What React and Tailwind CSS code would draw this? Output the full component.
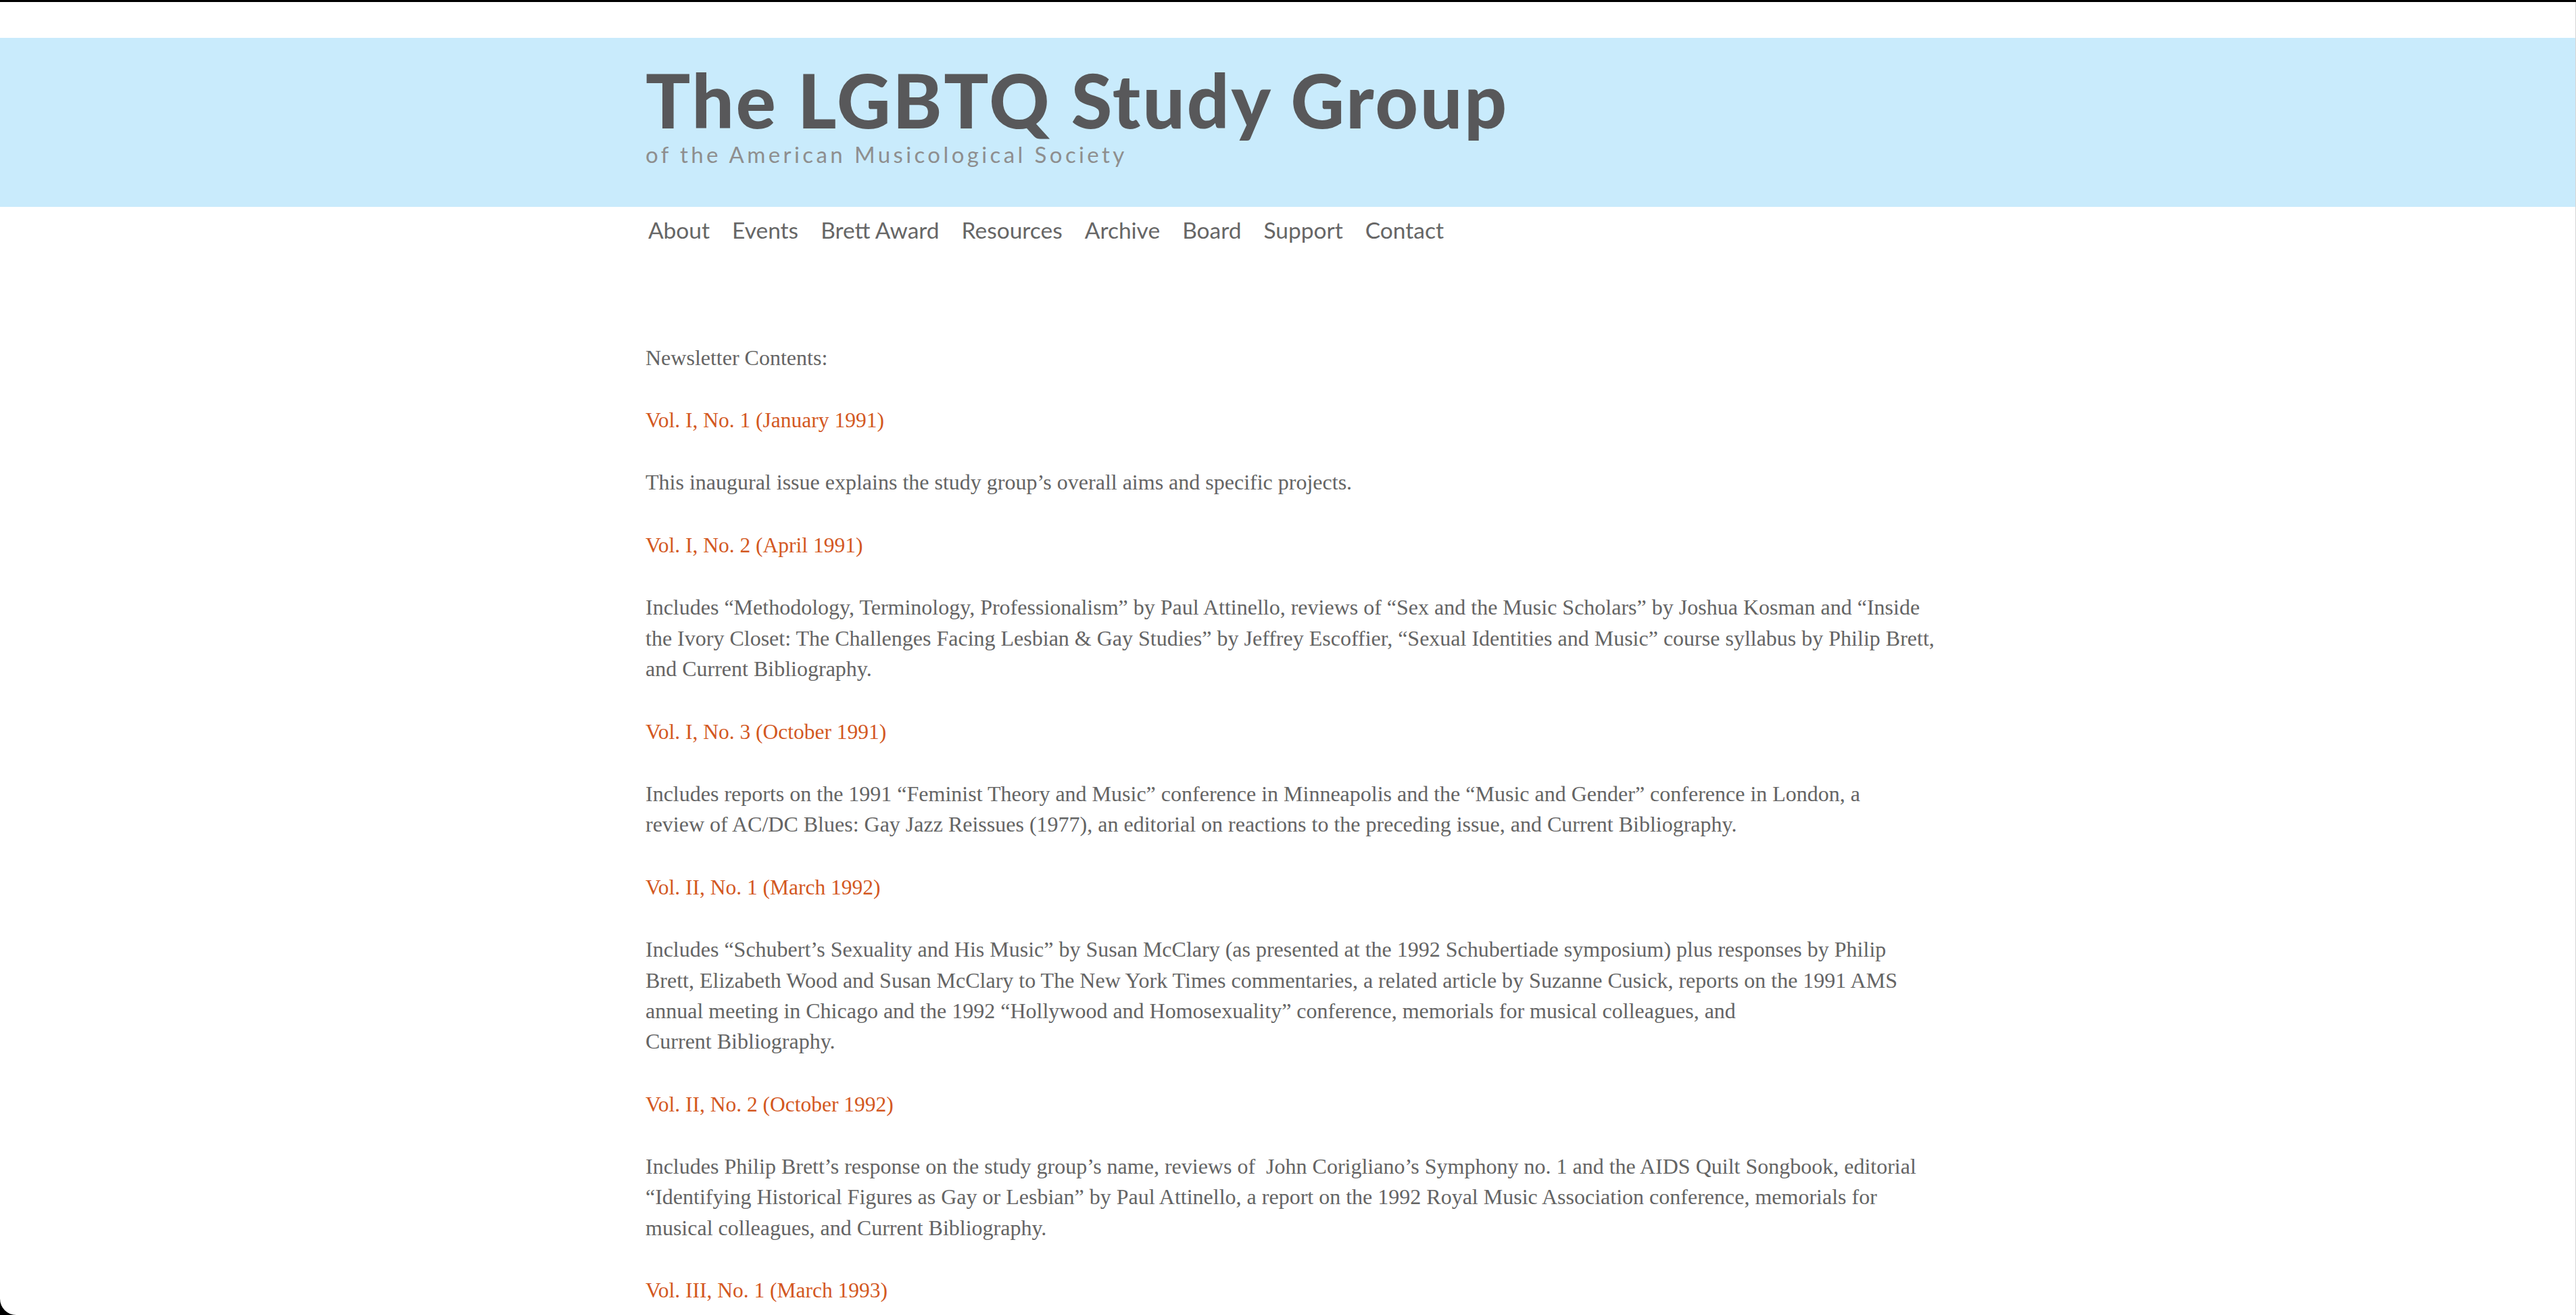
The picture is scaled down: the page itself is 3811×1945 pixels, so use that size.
import React from "react";

const items = [
  { type: "p", lines: ["Newsletter Contents:"] },
  { type: "l", lines: ["Vol. I, No. 1 (January 1991)"] },
  { type: "p", lines: ["This inaugural issue explains the study group’s overall aims and specific projects."] },
  { type: "l", lines: ["Vol. I, No. 2 (April 1991)"] },
  {
    type: "p",
    lines: [
      "Includes “Methodology, Terminology, Professionalism” by Paul Attinello, reviews of “Sex and the Music Scholars” by Joshua Kosman and “Inside",
      "the Ivory Closet: The Challenges Facing Lesbian & Gay Studies” by Jeffrey Escoffier, “Sexual Identities and Music” course syllabus by Philip Brett,",
      "and Current Bibliography.",
    ],
  },
  { type: "l", lines: ["Vol. I, No. 3 (October 1991)"] },
  {
    type: "p",
    lines: [
      "Includes reports on the 1991 “Feminist Theory and Music” conference in Minneapolis and the “Music and Gender” conference in London, a",
      "review of AC/DC Blues: Gay Jazz Reissues (1977), an editorial on reactions to the preceding issue, and Current Bibliography.",
    ],
  },
  { type: "l", lines: ["Vol. II, No. 1 (March 1992)"] },
  {
    type: "p",
    lines: [
      "Includes “Schubert’s Sexuality and His Music” by Susan McClary (as presented at the 1992 Schubertiade symposium) plus responses by Philip",
      "Brett, Elizabeth Wood and Susan McClary to The New York Times commentaries, a related article by Suzanne Cusick, reports on the 1991 AMS",
      "annual meeting in Chicago and the 1992 “Hollywood and Homosexuality” conference, memorials for musical colleagues, and",
      "Current Bibliography.",
    ],
  },
  { type: "l", lines: ["Vol. II, No. 2 (October 1992)"] },
  {
    type: "p",
    lines: [
      "Includes Philip Brett’s response on the study group’s name, reviews of  John Corigliano’s Symphony no. 1 and the AIDS Quilt Songbook, editorial",
      "“Identifying Historical Figures as Gay or Lesbian” by Paul Attinello, a report on the 1992 Royal Music Association conference, memorials for",
      "musical colleagues, and Current Bibliography.",
    ],
  },
  { type: "l", lines: ["Vol. III, No. 1 (March 1993)"] },
];

const nav = ["About", "Events", "Brett Award", "Resources", "Archive", "Board", "Support", "Contact"];

export default function App() {
  return (
    <div className="h-[1945px] w-full overflow-hidden bg-black pt-[3px]">
      <div className="h-[1942px] overflow-hidden rounded-bl-[24px] border-r border-[#d6d6d6] bg-white">
        <div className="h-[53px]" />
        <header className="bg-[#c9ebfc] pb-[61px] pt-[36px]">
          <div className="mx-auto w-[1900px]">
            <h1 className="whitespace-nowrap font-['Lato',sans-serif] text-[110px] font-black leading-none tracking-[3px] text-[#58585a]">
              The LGBTQ Study Group
            </h1>
            <div className="mt-[10px] whitespace-nowrap font-['Lato',sans-serif] text-[33px] leading-none tracking-[4.4px] text-[#8e8e8e]">
              of the American Musicological Society
            </div>
          </div>
        </header>
        <nav className="mx-auto mt-[18px] w-[1900px] pl-[4px]">
          <ul className="flex gap-[33px] font-['Lato',sans-serif] text-[33.5px] leading-none text-[#666666]">
            {nav.map((n) => (
              <li key={n} className="whitespace-nowrap">{n}</li>
            ))}
          </ul>
        </nav>
        <main className="mx-auto mt-[149px] flex w-[1900px] flex-col gap-[47.2px] font-['Liberation_Serif',serif] text-[32px] leading-[45.3px] text-[#646464]">
          {items.map((it, i) => (
            <p key={i} className={it.type === "l" ? "text-[31.5px] text-[#d3581f]" : ""}>
              {it.lines.map((line, j) => (
                <span key={j} className="block whitespace-pre">
                  {line}
                </span>
              ))}
            </p>
          ))}
        </main>
      </div>
    </div>
  );
}
